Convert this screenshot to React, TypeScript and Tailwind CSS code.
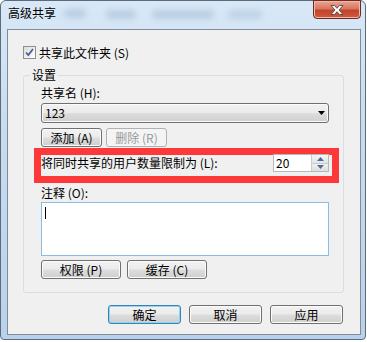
import type { ReactNode } from "react"

function Btn({ children, className = "" }: { children: ReactNode; className?: string }) {
  return (
    <div
      className={
        "h-[19px] rounded-[3px] border flex items-center justify-center text-[12px] leading-none " + className
      }
    >
      {children}
    </div>
  )
}

const normal =
  "border-[#707070] bg-[linear-gradient(#f2f2f2_0%,#ebebeb_48%,#dddddd_52%,#cfcfcf_100%)] shadow-[inset_0_0_0_1px_#fbfbfb] text-black"
const primary =
  "border-[#3c7fb1] bg-[linear-gradient(#f2f2f2_0%,#ebebeb_48%,#dddddd_52%,#cfcfcf_100%)] shadow-[inset_0_0_0_1px_#8fd6f5] text-black"
const disabled = "border-[#adb2b5] bg-[#f4f4f4] text-[#9a9a9a]"

export default function App() {
  return (
    <div className="w-[367px] h-[342px] bg-white font-['Noto_Sans_CJK_SC',sans-serif] text-black">
      {/* Window frame */}
      <div className="w-[366px] h-[340px] rounded-t-[6px] rounded-b-[4px] border border-[#5a6b7e] bg-[linear-gradient(180deg,#d8e8f7_0%,#c9ddf1_35%,#b9d1ea_100%)] flex flex-col">
        {/* Title bar */}
        <div className="h-[28px] flex items-start shrink-0">
          <span className="pl-[7px] pt-[5px] text-[12px] leading-[14px]">高级共享</span>
          <div className="ml-[8px] mt-[8px] w-[22px] h-[9px] rounded bg-[#9db4cc] blur-[3px] opacity-50" />
          <div className="ml-[20px] mt-[9px] w-[30px] h-[9px] rounded bg-[#9db4cc] blur-[3px] opacity-50" />
          <div className="ml-[16px] mt-[9px] w-[62px] h-[9px] rounded bg-[#9db4cc] blur-[3px] opacity-50" />
          <div className="ml-[14px] mt-[9px] w-[34px] h-[9px] rounded bg-[#9db4cc] blur-[3px] opacity-40" />
          <div className="ml-auto mr-[4px] -mt-[1px] w-[48px] h-[19px] rounded-b-[4px] border border-[#6e2a22] bg-[linear-gradient(180deg,#e9a593_0%,#d7775f_45%,#c4432b_55%,#cf5a40_100%)] shadow-[inset_0_0_0_1px_#f0b8a8] flex items-center justify-center">
            <svg width="14" height="10" viewBox="0 0 14 10">
              <path
                d="M1 0.5h3.5L7 3.3 9.5 0.5H13L9 5l4 4.5H9.5L7 6.7 4.5 9.5H1L5 5z"
                fill="#ffffff"
                stroke="#4a4a4a"
                strokeWidth="0.9"
                strokeLinejoin="round"
              />
            </svg>
          </div>
        </div>

        {/* Client area */}
        <div className="ml-[6px] mr-[4px] mb-[4px] flex-1 bg-[#f0f0f0] border border-[#838b94] flex flex-col text-[12px]">
          <div className="mt-[16px] ml-[15px] flex items-center gap-[3px] h-[13px]">
            <div className="w-[13px] h-[13px] border border-[#8e8f8f] bg-[linear-gradient(135deg,#dcdcdc,#ffffff)] flex items-center justify-center">
              <svg width="9" height="9" viewBox="0 0 9 9">
                <path d="M1 4.5l2.3 2.5L8 1" fill="none" stroke="#4a5f97" strokeWidth="1.8" />
              </svg>
            </div>
            <span className="leading-[16px]">共享此文件夹 (S)</span>
          </div>

          <fieldset className="mt-[8px] ml-[15px] mr-[16px] border border-[#d5dfe5] rounded-[3px] pl-[17px] pr-[14px] pb-[13px]">
            <legend className="-ml-[11px] px-[2px] leading-[16px]">设置</legend>

            <div className="mt-[2px] leading-[16px]">共享名 (H):</div>
            <div className="mt-[2px] h-[20px] rounded-[3px] border border-[#707070] bg-[linear-gradient(#f2f2f2_0%,#ebebeb_48%,#dddddd_52%,#cfcfcf_100%)] shadow-[inset_0_0_0_1px_#fbfbfb] flex items-center justify-between pl-[3px] pr-[3px]">
              <span className="leading-none">123</span>
              <svg width="7" height="4" viewBox="0 0 7 4">
                <path d="M0 0h7L3.5 4z" fill="#000" />
              </svg>
            </div>

            <div className="mt-[5px] flex gap-[4px]">
              <Btn className={"w-[61px] " + normal}>添加 (A)</Btn>
              <Btn className={"w-[61px] " + disabled}>删除 (R)</Btn>
            </div>

            <div className="mt-[1px] -ml-[7px] -mr-[10px] h-[35px] border-[7px] border-[#fc3838] flex items-start justify-between pr-[3px]">
              <span className="leading-[16px]">将同时共享的用户数量限制为 (L):</span>
              <div className="-mt-[1px] h-[18px] w-[56px] flex border border-[#b4b8bd] bg-white">
                <div className="flex-1 flex items-center pl-[2px] leading-none">20</div>
                <div className="w-[17px] flex flex-col border-l border-[#c8ccd0]">
                  <div className="flex-1 border-b border-[#c8ccd0] bg-[linear-gradient(#f6f6f6,#e4e4e4)] flex items-center justify-center">
                    <svg width="7" height="4" viewBox="0 0 7 4">
                      <path d="M3.5 0L7 4H0z" fill="#4f6a9c" />
                    </svg>
                  </div>
                  <div className="flex-1 bg-[linear-gradient(#f0f0f0,#dedede)] flex items-center justify-center">
                    <svg width="7" height="4" viewBox="0 0 7 4">
                      <path d="M0 0h7L3.5 4z" fill="#4f6a9c" />
                    </svg>
                  </div>
                </div>
              </div>
            </div>

            <div className="mt-[2px] leading-[16px]">注释 (O):</div>
            <div className="mt-[1px] h-[54px] border border-[#8cbbe3] bg-white pl-[3px] pt-[4px]">
              <div className="w-[1px] h-[12px] bg-black" />
            </div>

            <div className="mt-[4px] flex gap-[6px]">
              <Btn className={"w-[80px] " + normal}>权限 (P)</Btn>
              <Btn className={"w-[80px] " + normal}>缓存 (C)</Btn>
            </div>
          </fieldset>

          <div className="mt-[12px] mr-[17px] flex justify-end gap-[8px]">
            <Btn className={"w-[73px] " + primary}>确定</Btn>
            <Btn className={"w-[73px] " + normal}>取消</Btn>
            <Btn className={"w-[73px] " + normal}>应用</Btn>
          </div>
        </div>
      </div>
    </div>
  )
}
